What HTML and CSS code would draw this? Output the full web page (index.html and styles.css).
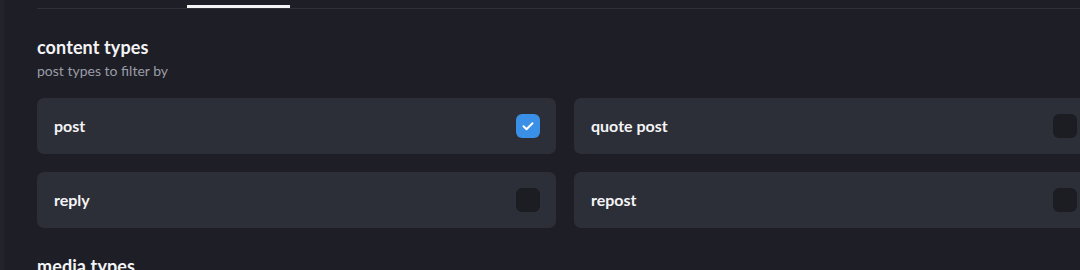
FILE: index.html
```html
<!DOCTYPE html>
<html>
<head>
<meta charset="utf-8">
<link rel="stylesheet" href="styles.css">
</head>
<body>
<div class="layout">
  <div class="edge"></div>
  <main class="main">
    <div class="tabbar"><div class="tab-indicator"></div></div>
    <section class="section">
      <h2 class="title">content types</h2>
      <p class="subtitle">post types to filter by</p>
      <div class="grid">
        <label class="option"><span class="label">post</span><span class="box checked"><svg viewBox="0 0 24 24" width="24" height="24"><path d="M7.5 12.3l3 3 6-6" fill="none" stroke="#fff" stroke-width="2" stroke-linecap="round" stroke-linejoin="round"/></svg></span></label>
        <label class="option"><span class="label">quote post</span><span class="box"></span></label>
        <label class="option"><span class="label">reply</span><span class="box"></span></label>
        <label class="option"><span class="label">repost</span><span class="box"></span></label>
      </div>
    </section>
    <section class="section">
      <h2 class="title">media types</h2>
    </section>
  </main>
</div>
</body>
</html>
```
FILE: styles.css
```css
html, body {
  margin: 0;
  padding: 0;
  background: #1e1f26;
  overflow: hidden;
}
body {
  font-family: "Lato", "Open Sans", sans-serif;
  color: #f1f1f3;
}
.layout {
  display: flex;
  height: 270px;
}
.edge {
  width: 4px;
  flex: none;
  background: #23242b;
}
.main {
  padding-left: 33px;
  flex: 1;
  min-width: 0;
}
.tabbar {
  height: 8px;
  border-bottom: 1px solid #2f3039;
  display: flex;
  align-items: flex-end;
}
.tab-indicator {
  width: 103px;
  height: 3px;
  margin-left: 150px;
  background: #f4f4f6;
}
.section {
  padding-top: 26px;
}
.title {
  margin: 0;
  font-size: 18px;
  line-height: 24px;
  font-weight: 700;
  color: #f4f4f6;
  letter-spacing: 0.1px;
}
.subtitle {
  margin: 3px 0 0;
  font-size: 14px;
  line-height: 18px;
  color: #9b9ca6;
}
.grid {
  margin-top: 18px;
  display: grid;
  grid-template-columns: 519px 519px;
  gap: 18px;
}
.option {
  height: 56px;
  box-sizing: border-box;
  padding: 0 16px 0 17px;
  background: #2d2f38;
  border-radius: 7px;
  display: flex;
  align-items: center;
  justify-content: space-between;
}
.label {
  font-size: 16px;
  font-weight: 700;
  color: #f4f4f6;
  padding-bottom: 1px;
}
.box {
  width: 24px;
  height: 24px;
  border-radius: 6px;
  background: #1c1d22;
  display: flex;
}
.box.checked {
  background: #3a8fe6;
}
```
